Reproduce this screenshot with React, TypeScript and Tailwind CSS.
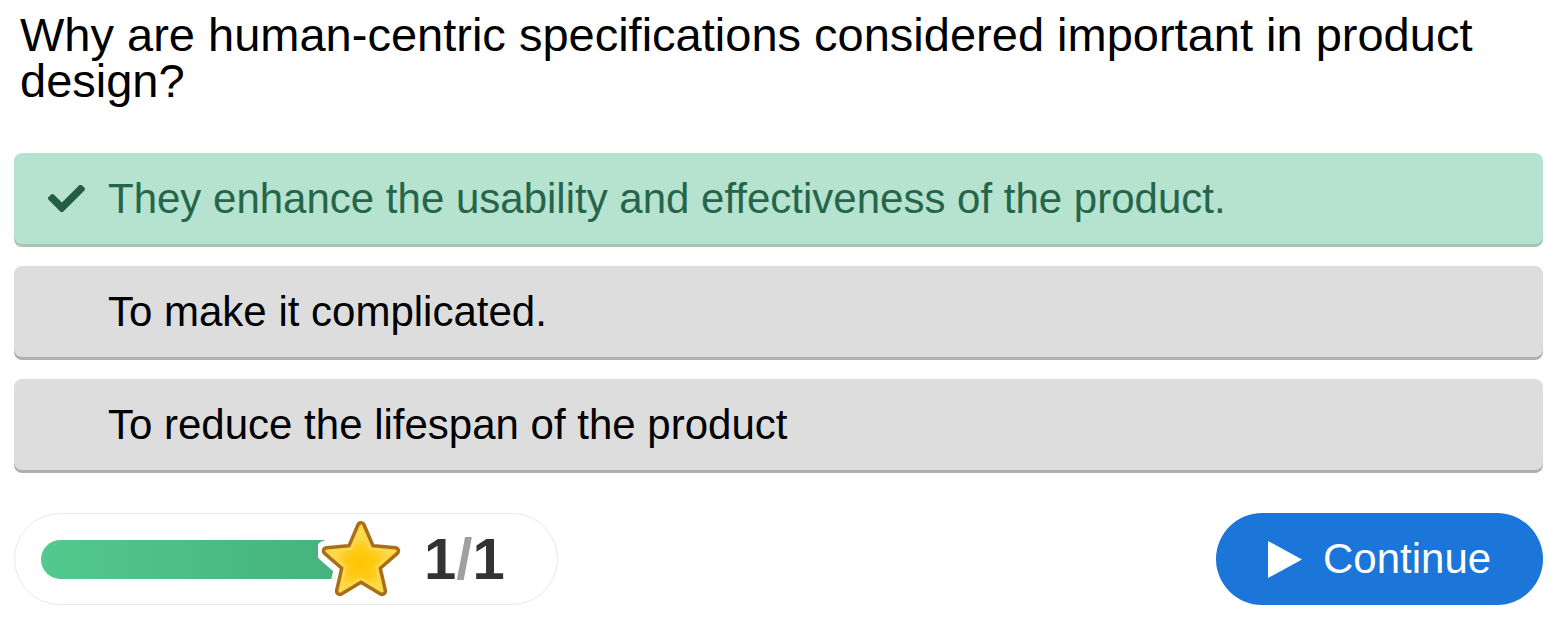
import type React from "react"

const font = { fontFamily: '"Liberation Sans", Arial, sans-serif' }

const options = [
  { text: "They enhance the usability and effectiveness of the product.", correct: true },
  { text: "To make it complicated.", correct: false },
  { text: "To reduce the lifespan of the product", correct: false },
]

const CheckIcon = () => (
  <svg viewBox="0 72 512 370" className="h-[27px] w-[37px]" fill="#245e42">
    <path d="M173.898 439.404l-166.4-166.4c-9.997-9.997-9.997-26.206 0-36.204l36.203-36.204c9.997-9.998 26.207-9.998 36.204 0L192 312.69 432.095 72.596c9.997-9.997 26.207-9.997 36.204 0l36.203 36.204c9.997 9.997 9.997 26.206 0 36.204l-294.4 294.401c-9.998 9.997-26.207 9.997-36.204-.001z" />
  </svg>
)

// five-pointed star; rounded tips come from the wide round-joined strokes
const starPoints = (() => {
  const pts: string[] = []
  const cx = 43
  const cy = 44
  for (let i = 0; i < 10; i++) {
    const r = i % 2 === 0 ? 36 : 16.5
    const a = (Math.PI / 5) * i - Math.PI / 2
    pts.push(`${(cx + r * Math.cos(a)).toFixed(2)},${(cy + r * Math.sin(a)).toFixed(2)}`)
  }
  return pts.join(" ")
})()

const Star = () => (
  <svg viewBox="0 0 86 82" className="h-[82px] w-[86px]">
    <defs>
      <radialGradient id="starFill" cx="50%" cy="58%" r="55%">
        <stop offset="0%" stopColor="#ffc400" />
        <stop offset="45%" stopColor="#ffcc1a" />
        <stop offset="100%" stopColor="#ffe27a" />
      </radialGradient>
    </defs>
    <polygon points={starPoints} fill="white" stroke="white" strokeWidth="22" strokeLinejoin="round" />
    <polygon points={starPoints} fill="#a86f18" stroke="#a86f18" strokeWidth="10" strokeLinejoin="round" />
    <polygon points={starPoints} fill="url(#starFill)" stroke="#ffd84a" strokeWidth="3" strokeLinejoin="round" />
  </svg>
)

const App: React.FC = () => {
  return (
    <div className="min-h-[630px] w-[1565px] bg-white pl-[14px] pr-[22px]" style={font}>
      <h1 className="pl-[6px] pt-[12px] text-[47px] leading-[46px] text-black">
        Why are human-centric specifications considered important in product design?
      </h1>

      <div className="mt-[49px] flex flex-col gap-[22px]">
        {options.map((option) => (
          <div
            key={option.text}
            className={`flex h-[91px] items-center rounded-[8px] ${
              option.correct
                ? "bg-[#b5e3cf] text-[#26654a] shadow-[0_3px_0_#a5c5b4]"
                : "bg-[#dddddd] text-black shadow-[0_3px_0_#b0b0b0]"
            }`}
          >
            <div className="flex w-[94px] shrink-0 pl-[34px]">
              {option.correct && <CheckIcon />}
            </div>
            <span className="text-[42px] leading-none">{option.text}</span>
          </div>
        ))}
      </div>

      <div className="mt-[43px] flex items-center justify-between">
        <div className="flex h-[92px] w-[544px] items-center rounded-full border border-[#e8e8e8] pl-[26px]">
          <div className="flex items-center">
            <div className="h-[39px] w-[300px] rounded-l-full bg-gradient-to-r from-[#52c98e] to-[#46b27f]" />
            <div className="-ml-[23px]">
              <Star />
            </div>
          </div>
          <div className="ml-[20px] text-[58px] font-bold leading-none text-[#333333]">
            1<span className="text-[#a0a0a0]">/</span>1
          </div>
        </div>

        <button
          type="button"
          className="flex h-[92px] w-[327px] items-center rounded-full bg-[#1c75d8] pl-[52px] text-white"
        >
          <svg viewBox="0 0 34 37" className="h-[37px] w-[34px]" fill="white">
            <polygon points="0,0 34,18.5 0,37" />
          </svg>
          <span className="ml-[21px] text-[42px] leading-none">Continue</span>
        </button>
      </div>
    </div>
  )
}

export default App
